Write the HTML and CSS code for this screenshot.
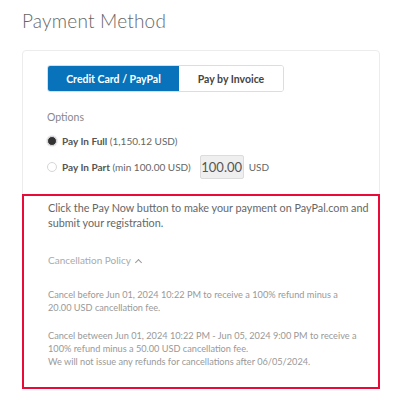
FILE: index.html
```html
<!DOCTYPE html>
<html lang="en">
<head>
    <meta charset="UTF-8">
    <meta name="viewport" content="width=device-width, initial-scale=1.0">
    <title>Payment Method</title>
    <link rel="stylesheet" href="styles.css">
</head>
<body>
    <h1>Payment Method</h1>
    <div class="card">
        <div class="card-top">
            <div class="tabs">
                <button type="button" class="tab active">Credit Card / PayPal</button>
                <button type="button" class="tab">Pay by Invoice</button>
            </div>
            <div class="options-label">Options</div>
            <label class="option">
                <span class="radio checked"></span>
                <span><strong>Pay In Full</strong> (1,150.12 USD)</span>
            </label>
            <label class="option">
                <span class="radio"></span>
                <span><strong>Pay In Part</strong> (min 100.00 USD)</span>
                <input type="text" class="amount" value="100.00" disabled>
                <span>USD</span>
            </label>
        </div>
        <div class="notice">
            <p class="lead">Click the Pay Now button to make your payment on PayPal.com and submit your registration.</p>
            <div class="policy-toggle">Cancellation Policy <span class="caret"></span></div>
            <p class="policy">Cancel before Jun 01, 2024 10:22 PM to receive a 100% refund minus a 20.00 USD cancellation fee.</p>
            <p class="policy">Cancel between Jun 01, 2024 10:22 PM - Jun 05, 2024 9:00 PM to receive a 100% refund minus a 50.00 USD cancellation fee.<br>We will not issue any refunds for cancellations after 06/05/2024.</p>
        </div>
    </div>
</body>
</html>
```

FILE: styles.css
```css
body {
    margin: 0;
    padding: 9px 20px 0 22px;
    font-family: Lato, "Open Sans", sans-serif;
    background-color: #fff;
    color: #555;
}
h1 {
    margin: 0 0 17px;
    font-size: 19px;
    font-weight: 300;
    line-height: 24px;
    color: #666;
    letter-spacing: 0.2px;
}
.card {
    border: 1px solid #ececec;
    border-radius: 4px;
}
.card-top {
    padding: 14px 24px 15px;
}
.tabs {
    display: flex;
    width: 237px;
    height: 27px;
    border: 1px solid #ddd;
    border-radius: 3px;
    box-sizing: border-box;
    overflow: hidden;
}
.tab {
    border: none;
    background: #fff;
    font-family: inherit;
    font-size: 10.5px;
    font-weight: 700;
    color: #444;
    padding: 0;
    cursor: pointer;
}
.tab:first-child {
    width: 131px;
}
.tab:last-child {
    flex: 1;
}
.tab.active {
    background-color: #0873bb;
    color: #fff;
}
.options-label {
    margin-top: 18px;
    font-size: 10.5px;
    line-height: 14px;
    color: #888;
}
.option {
    display: flex;
    align-items: center;
    gap: 5px;
    font-size: 10px;
    color: #666;
    height: 20px;
    margin-top: 7px;
}
.option + .option {
    height: 24px;
    margin-top: 4px;
}
.option strong {
    color: #555;
}
.radio {
    width: 10px;
    height: 10px;
    border-radius: 50%;
    border: 1px solid #d6d6d6;
    box-sizing: border-box;
}
.radio.checked {
    background-color: #333;
    border: 1px solid #ddd;
    box-shadow: 0 0 0 1px #eee;
}
.amount {
    width: 44px;
    height: 24px;
    box-sizing: border-box;
    margin-left: 4px;
    border: 1px solid #dcdcdc;
    border-radius: 2px;
    background-color: #efefef;
    font-family: inherit;
    font-size: 13px;
    color: #555;
    text-align: center;
    padding: 0;
}
.notice {
    margin: 0 -1px -1px;
    border: 2px solid #ea0a38;
    padding: 4px 8px 19px 24px;
}
.lead {
    margin: 0;
    max-width: 325px;
    font-size: 10.8px;
    line-height: 15px;
    color: #666;
}
.policy-toggle {
    margin-top: 23px;
    font-size: 10px;
    line-height: 14px;
    color: #aaa;
}
.caret {
    display: inline-block;
    width: 4px;
    height: 4px;
    border-left: 1px solid #999;
    border-top: 1px solid #999;
    transform: rotate(45deg);
    margin-left: 3px;
    position: relative;
    top: 1px;
}
.policy {
    margin: 21px 0 0;
    max-width: 312px;
    font-size: 9.2px;
    line-height: 13px;
    color: #999;
}
.policy + .policy {
    margin-top: 15px;
}
```
